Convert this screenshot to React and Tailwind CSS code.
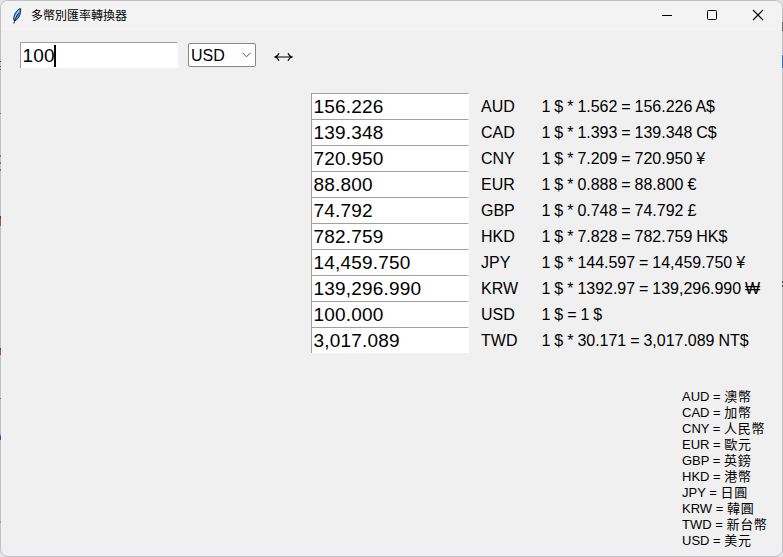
const rates = [
  ['156.226', 'AUD', '1 $ * 1.562 = 156.226 A$'],
  ['139.348', 'CAD', '1 $ * 1.393 = 139.348 C$'],
  ['720.950', 'CNY', '1 $ * 7.209 = 720.950 ¥'],
  ['88.800', 'EUR', '1 $ * 0.888 = 88.800 €'],
  ['74.792', 'GBP', '1 $ * 0.748 = 74.792 £'],
  ['782.759', 'HKD', '1 $ * 7.828 = 782.759 HK$'],
  ['14,459.750', 'JPY', '1 $ * 144.597 = 14,459.750 ¥'],
  ['139,296.990', 'KRW', '1 $ * 1392.97 = 139,296.990 ₩'],
  ['100.000', 'USD', '1 $ = 1 $'],
  ['3,017.089', 'TWD', '1 $ * 30.171 = 3,017.089 NT$'],
];

const names = [
  ['AUD', '澳幣'],
  ['CAD', '加幣'],
  ['CNY', '人民幣'],
  ['EUR', '歐元'],
  ['GBP', '英鎊'],
  ['HKD', '港幣'],
  ['JPY', '日圓'],
  ['KRW', '韓圓'],
  ['TWD', '新台幣'],
  ['USD', '美元'],
];

// Slivers of the desktop that show past the window's left and right edges.
const slivers = [
  'left-0 top-[61px] h-px bg-[#555]',
  'left-0 top-[66px] h-px bg-[#555]',
  'left-0 top-[69px] h-px bg-[#555]',
  'left-0 top-[113px] h-px bg-[#a5724e]',
  'left-0 top-[155px] h-[2px] bg-[#777a84]',
  'left-0 top-[162px] h-[2px] bg-[#777a84]',
  'left-0 top-[169px] h-[2px] bg-[#777a84]',
  'left-0 top-[216px] h-[3px] bg-[#3f4a70]',
  'left-0 top-[219px] h-[7px] bg-[#955a48]',
  'left-0 top-[348px] h-[2px] bg-[#3f4a70]',
  'left-0 top-[350px] h-[5px] bg-[#955a48]',
  'left-0 top-[398px] h-px bg-[#a5724e]',
  'left-0 top-[434px] h-[2px] bg-[#4aa3c8]',
  'left-0 top-[436px] h-[4px] bg-[#5b3f6b]',
  'left-0 top-[521px] h-[2px] bg-[#d98672]',
  'right-0 top-[22px] h-[9px] bg-[#6b6b6b]',
  'right-0 top-[55px] h-[13px] bg-[#3b78c9]',
  'right-0 top-[281px] h-[2px] bg-[#555]',
  'right-0 top-[285px] h-[2px] bg-[#555]',
];

function Entry({ value, focused = false }) {
  return (
    <div className="flex h-[26px] w-[158px] items-center border-t border-l border-r border-t-[#a0a0a0] border-l-[#a0a0a0] border-r-white bg-white pl-[1.5px] text-[19px] leading-[24px] text-black">
      <span className="tracking-[0.18px]">{value}</span>
      {focused && <span className="-ml-[0.5px] h-[22px] w-0.5 bg-black" />}
    </div>
  );
}

function Feather() {
  return (
    <svg width="12" height="18" viewBox="0 0 12 18">
      <path d="M9.6 1.4C6 2.6 3 6.6 2.6 12l.9 2.2c3.9-2 6.8-6.5 6.1-12.8Z" fill="#3f8fdc" stroke="#1b2a3a" strokeWidth="0.9" />
      <path d="M7.9 3.6C5.8 6.2 4.6 8.6 4 11.4" fill="none" stroke="#a5d4fa" strokeWidth="1.2" />
      <path d="M7.4 6.4C5.2 9.8 3.6 12.6 2.9 16.6" fill="none" stroke="#1a1a1a" strokeWidth="0.9" />
    </svg>
  );
}

function TitleBar() {
  return (
    <div className="flex h-[30px] shrink-0 items-center bg-[#f3f3f3] pl-[10px]">
      <Feather />
      <span className="ml-[8px] flex-1 text-[12px] leading-4">多幣別匯率轉換器</span>
      <svg width="121" height="30" viewBox="0 0 121 30" fill="none" stroke="#000">
        <path d="M1 14.5h10" />
        <rect x="46.5" y="9.5" width="9" height="9" rx="1" />
        <path d="M92 9l10 10M102 9l-10 10" strokeWidth="1.1" />
      </svg>
    </div>
  );
}

export default function App() {
  return (
    <div className="relative h-[557px] w-[783px] overflow-hidden bg-[#e4e4e6] font-['Liberation_Sans','Noto_Sans_CJK_TC',sans-serif] text-black">
      <div className="flex h-full flex-col overflow-hidden rounded-[8px] border border-[#c1c2c6] bg-[#f0f0f0]">
        <TitleBar />
        <div className="flex h-[26px] shrink-0 items-center mt-[11px] pl-[19px]">
          <Entry value="100" focused />
          <div className="ml-[10px] flex h-6 w-[68px] items-center justify-between rounded-[2px] border border-[#868686] bg-white pl-0.5 pr-1 text-[16px]">
            <span className="pt-px">USD</span>
            <svg width="9" height="6" viewBox="0 0 9 6" fill="none" stroke="#555">
              <path d="M.5 .8l4 4 4-4" />
            </svg>
          </div>
          <svg className="ml-[18px] mt-[3px]" width="19" height="10" viewBox="0 0 19 10" fill="none" stroke="#000" strokeWidth="1.2">
            <path d="M1 5h17M5 1.2Q4 4 1 5Q4 6 5 8.8M14 1.2Q15 4 18 5Q15 6 14 8.8" />
          </svg>
        </div>
        <div className="mt-[25px] flex flex-col pl-[310px]">
          {rates.map(([value, code, text]) => (
            <div key={code} className="flex h-[26px] items-center text-[16px] whitespace-nowrap">
              <Entry value={value} />
              <span className="ml-3 w-[60.5px] pt-px leading-[25px]">{code}</span>
              <span className="pt-px leading-[25px] tracking-[-0.02px] [word-spacing:-0.45px]">{text}</span>
            </div>
          ))}
        </div>
        <div className="mt-[36px] flex flex-col pl-[681px] text-[13px] leading-4 whitespace-nowrap">
          {names.map(([code, name]) => (
            <span key={code} className="h-4">
              {code} = <span className="tracking-[0.7px]">{name}</span>
            </span>
          ))}
        </div>
      </div>
      {slivers.map((place) => (
        <span key={place} className={`absolute w-px ${place}`} />
      ))}
    </div>
  );
}
